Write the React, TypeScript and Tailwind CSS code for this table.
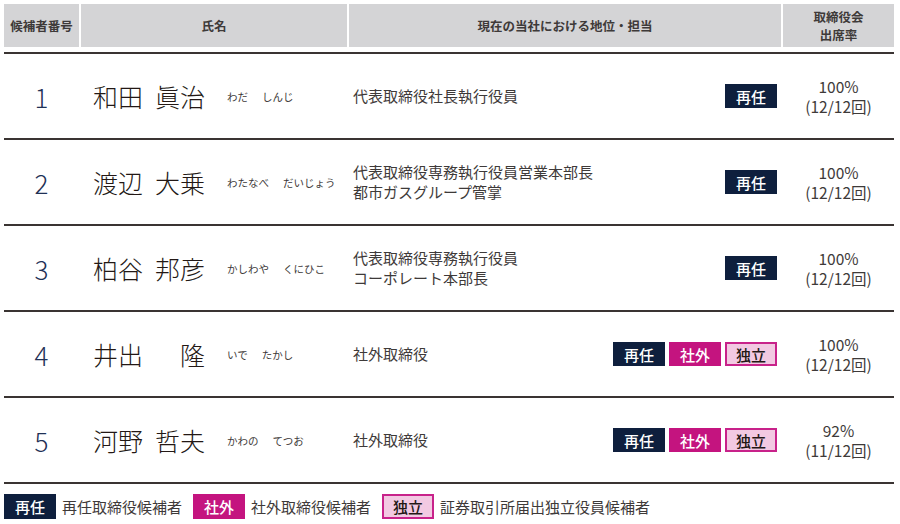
import React from "react";

type Badge = "re" | "out" | "ind";

const rows: {
  no: string;
  family: string;
  given: string;
  kanaF: string;
  kanaG: string;
  pos: string[];
  badges: Badge[];
  rate: string;
  count: string;
}[] = [
  { no: "1", family: "和田", given: "眞治", kanaF: "わだ", kanaG: "しんじ", pos: ["代表取締役社長執行役員"], badges: ["re"], rate: "100%", count: "(12/12回)" },
  { no: "2", family: "渡辺", given: "大乗", kanaF: "わたなべ", kanaG: "だいじょう", pos: ["代表取締役専務執行役員営業本部長", "都市ガスグループ管掌"], badges: ["re"], rate: "100%", count: "(12/12回)" },
  { no: "3", family: "柏谷", given: "邦彦", kanaF: "かしわや", kanaG: "くにひこ", pos: ["代表取締役専務執行役員", "コーポレート本部長"], badges: ["re"], rate: "100%", count: "(12/12回)" },
  { no: "4", family: "井出", given: "隆", kanaF: "いで", kanaG: "たかし", pos: ["社外取締役"], badges: ["re", "out", "ind"], rate: "100%", count: "(12/12回)" },
  { no: "5", family: "河野", given: "哲夫", kanaF: "かわの", kanaG: "てつお", pos: ["社外取締役"], badges: ["re", "out", "ind"], rate: "92%", count: "(11/12回)" },
];

function Tag({ kind, h = "h-[24px]" }: { kind: Badge; h?: string }) {
  if (kind === "re")
    return (
      <span className={`flex ${h} w-[52px] items-center justify-center bg-[#0e1f3d] text-[15px] font-medium leading-none text-white`}>
        再任
      </span>
    );
  if (kind === "out")
    return (
      <span className={`flex ${h} w-[52px] items-center justify-center bg-[#c4147f] text-[15px] font-medium leading-none text-white`}>
        社外
      </span>
    );
  return (
    <span className={`flex ${h} w-[52px] items-center justify-center border-2 border-[#c8228a] bg-[#f2c9e2] text-[15px] font-medium leading-none text-[#231815]`}>
      独立
    </span>
  );
}

export default function App() {
  return (
    <div
      className="h-[524px] w-[900px] bg-white pl-[4px] pt-[4px] text-[#3e3a39]"
      style={{ fontFamily: '"Noto Sans CJK JP", "Noto Sans", sans-serif' }}
    >
      <div className="w-[890px]">
        {/* header */}
        <div className="grid h-[43px] grid-cols-[75px_266px_432px_111px] gap-[2px] text-[12.5px] font-bold leading-[18px] text-[#3e3a39]">
          <div className="flex items-center justify-center bg-[#d4d4d6]">候補者番号</div>
          <div className="flex items-center justify-center bg-[#d4d4d6]">氏名</div>
          <div className="flex items-center justify-center bg-[#d4d4d6]">現在の当社における地位・担当</div>
          <div className="flex flex-col items-center justify-center bg-[#d4d4d6] text-[12.5px] leading-[18px]">
            <span>取締役会</span>
            <span>出席率</span>
          </div>
        </div>
        <div className="mt-[5px] border-t-2 border-[#3a3432]">
          {rows.map((r) => (
            <div
              key={r.no}
              className="grid h-[86px] grid-cols-[75px_266px_432px_111px] gap-[2px] border-b-2 border-[#3a3432]"
            >
              <div className="flex items-center justify-center text-[26px] font-light text-[#1f3156]">{r.no}</div>
              <div className="flex items-center pl-[12px]">
                <div className="flex w-[112px] justify-between text-[25px] font-light leading-none text-[#231815]">
                  <span>{r.family}</span>
                  <span>{r.given}</span>
                </div>
                <div className="ml-[22px] mt-[2px] flex gap-[14px] text-[10.5px] leading-none">
                  <span>{r.kanaF}</span>
                  <span>{r.kanaG}</span>
                </div>
              </div>
              <div className="flex items-center justify-between pl-[4px] pr-[4px]">
                <div className="flex flex-col text-[15px] leading-[20px]">
                  {r.pos.map((p) => (
                    <span key={p}>{p}</span>
                  ))}
                </div>
                <div className="flex gap-[4px]">
                  {r.badges.map((b) => (
                    <Tag key={b} kind={b} />
                  ))}
                </div>
              </div>
              <div className="flex flex-col items-center justify-center text-[15.5px] leading-[20px]">
                <span>{r.rate}</span>
                <span>{r.count}</span>
              </div>
            </div>
          ))}
        </div>
        {/* legend */}
        <div className="mt-[10px] flex items-center text-[15px] leading-none">
          <Tag kind="re" h="h-[25px]" />
          <span className="ml-[6px]">再任取締役候補者</span>
          <span className="ml-[11px]">
            <Tag kind="out" h="h-[25px]" />
          </span>
          <span className="ml-[6px]">社外取締役候補者</span>
          <span className="ml-[11px]">
            <Tag kind="ind" h="h-[25px]" />
          </span>
          <span className="ml-[6px]">証券取引所届出独立役員候補者</span>
        </div>
      </div>
    </div>
  );
}
